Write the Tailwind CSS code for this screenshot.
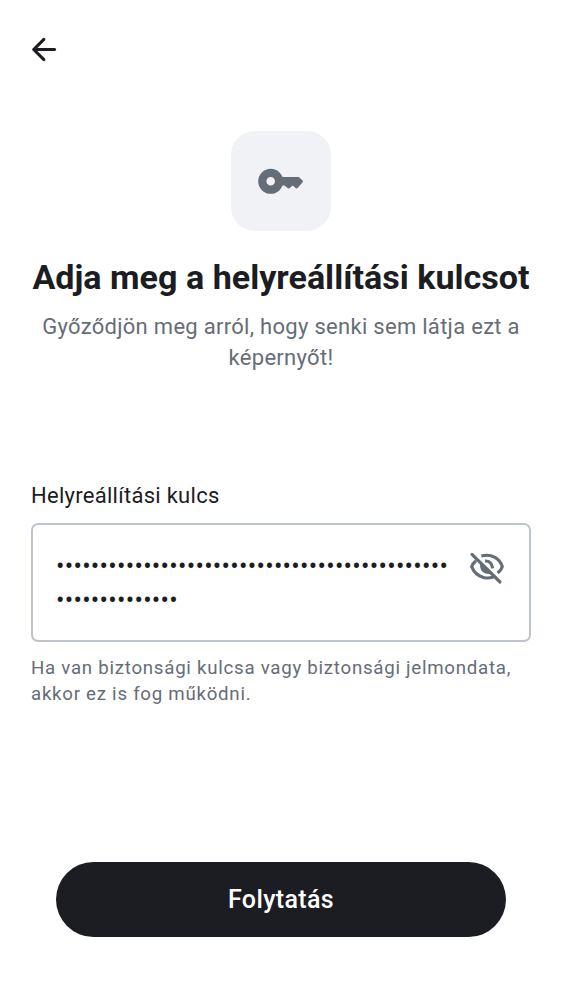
<!DOCTYPE html>
<html lang="hu">
<head>
<meta charset="utf-8">
<title>Helyreállítási kulcs</title>
<script src="https://cdn.jsdelivr.net/npm/@tailwindcss/browser@4"></script>
</head>
<body class="bg-white">
<main class="flex h-[1000px] w-[562px] flex-col overflow-hidden bg-white px-[31px] pt-[31px] font-[Roboto,sans-serif] text-[#1b1d22]">
  <button class="flex h-[37px] w-[38px] shrink-0 items-center" aria-label="Vissza">
    <svg class="-ml-[5.5px] size-[37px] shrink-0" viewBox="0 0 24 24" fill="currentColor"><path d="m10.875 19.3-6.6-6.6a.9.9 0 0 1-.213-.325A1.1 1.1 0 0 1 4 12q0-.2.063-.375a.9.9 0 0 1 .212-.325l6.600-6.600a.98.98 0 0 1 .687-.288.93.93 0 0 1 .713.288q.3.275.313.687a.93.93 0 0 1-.288.713L7.400 11h11.175q.424 0 .713.287.287.288.287.713 0 .424-.287.713a.97.97 0 0 1-.713.287H7.400l4.900 4.900q.275.275.287.7a.87.87 0 0 1-.287.7q-.275.3-.7.3a1 1 0 0 1-.725-.3"/></svg>
  </button>
  <div class="mt-[63px] flex size-[100px] shrink-0 items-center justify-center self-center rounded-[24px] bg-[#f0f2f5] text-[#656d77]">
    <svg class="h-[38px] w-[54px]" viewBox="0 0 54 38" fill="none"><circle cx="16.7" cy="19.3" r="8.4" stroke="currentColor" stroke-width="8.2"/><path d="M26 15h18.200q.7 0 1.200.5l3.200 3.100q.8.8 0 1.600l-5 5.900q-.9.900-1.800.1l-3.100-2.600-3.200 2.600q-.8.700-1.600 0L30.500 23.500H26Z" fill="currentColor"/></svg>
  </div>
  <h1 class="mt-[25px] -mx-2 whitespace-nowrap text-center text-[34.1px] leading-[43px] font-bold">Adja meg a helyreállítási kulcsot</h1>
  <p class="mt-[12px] text-center text-[22px] leading-[31px] tracking-[0.29px] text-[#656d77]">Győződjön meg arról, hogy senki sem látja ezt a<br>képernyőt!</p>
  <label class="mt-[107px] text-[22px] leading-[31px] tracking-[0.28px]">Helyreállítási kulcs</label>
  <div class="mt-[12px] flex h-[119px] shrink-0 justify-between rounded-[7px] border-2 border-[#bdc4cc] pl-[23px] pr-[21px] pt-[24px]">
    <div class="mt-px whitespace-nowrap text-[25px] leading-[34px] tracking-[0.28px]">•••••••••••••••••••••••••••••••••••••••••••••<br>••••••••••••••</div>
    <svg class="h-[38px] w-[42px] shrink-0 text-[#656d77]" viewBox="0 0 126 114" fill="none" stroke="currentColor" stroke-width="9.500"><path d="M18 16 102 99" stroke-linecap="round"/><path d="M46 21C78 12 102 31 109 53Q106 63 95 72M30 35Q20 43 17 53C32 91 72 92 88 80"/><path d="M57 36Q77 35 80 58"/><path d="M43 41 76 74Q61 78 50 69 40 60 43 41Z" fill="currentColor" stroke="none"/></svg>
  </div>
  <p class="mt-[13px] text-[18.7px] leading-[26.4px] tracking-[0.73px] text-[#656d77]">Ha van biztonsági kulcsa vagy biztonsági jelmondata,<br>akkor ez is fog működni.</p>
  <button class="mx-[25px] mt-[153.7px] h-[75px] shrink-0 rounded-full bg-[#1b1d22] pt-[2px] text-[25px] font-medium tracking-[0.36px] text-white">Folytatás</button>
</main>
</body>
</html>
